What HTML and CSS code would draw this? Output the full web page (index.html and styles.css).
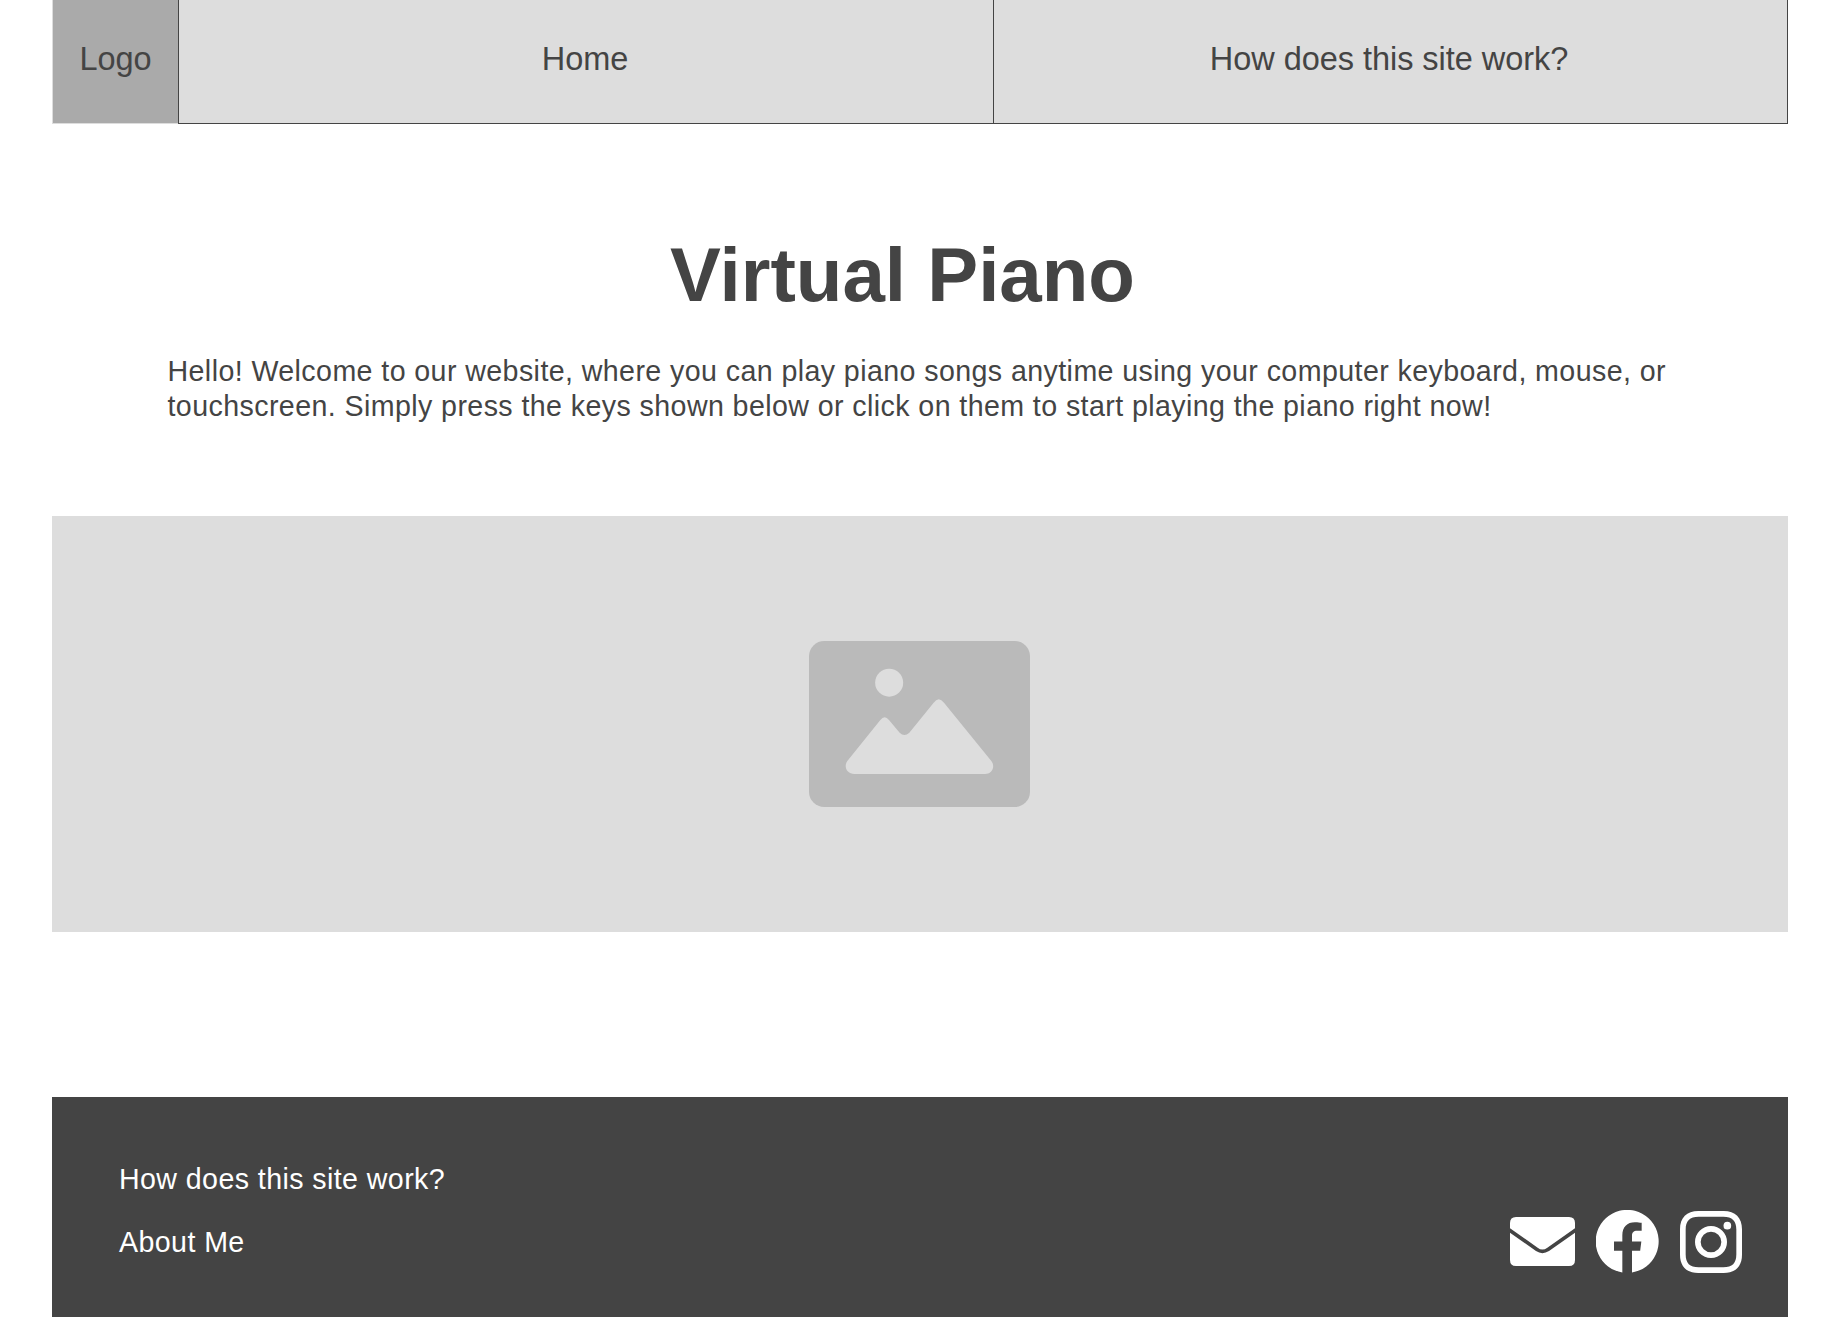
FILE: index.html
```html
<!DOCTYPE html>
<html lang="en">
<head>
<meta charset="utf-8">
<title>Virtual Piano</title>
<link rel="stylesheet" href="styles.css">
</head>
<body>
<div class="page">
  <nav class="nav">
    <a class="nav-logo">Logo</a>
    <a class="nav-item nav-home">Home</a>
    <a class="nav-item nav-how">How does this site work?</a>
  </nav>
  <main>
    <h1 class="title">Virtual Piano</h1>
    <p class="intro">Hello! Welcome to our website, where you can play piano songs anytime using your computer keyboard, mouse, or touchscreen. Simply press the keys shown below or click on them to start playing the piano right now!</p>
    <div class="media">
      <svg class="media-icon" viewBox="0 0 663 498">
        <rect width="663" height="498" rx="46" fill="#bababa"/>
        <circle cx="240.500" cy="125" r="42" fill="#ddd"/>
        <path d="M136 399C114 399 103 377 115 360L214 237Q227 221 240 237L272 275Q286 289 301 275L374 185Q389 164 405 185L547 360C560 377 549 399 528 399Z" fill="#ddd"/>
      </svg>
    </div>
  </main>
  <footer class="footer">
    <div class="footer-links">
      <a>How does this site work?</a>
      <a>About Me</a>
    </div>
    <div class="social">
      <svg class="icon-mail" viewBox="0 0 195 147">
        <path d="M0 34V18Q0 0 18 0H177Q195 0 195 18V34L112 92Q97 103 83 92Z"/>
        <path d="M0 47L78 102Q97 115 117 102L195 47V129Q195 147 177 147H18Q0 147 0 129Z"/>
      </svg>
      <svg class="icon-facebook" viewBox="0 0 189 188">
        <path d="M79 187V121.500H54V94H79V75C79 50 93 36 117 36C126 36 131 37 137 38V62H124C112 62 108 68 108 77V94H136L132.500 121.500H108V187A94.500 94.500 0 1 0 79 187Z"/>
      </svg>
      <svg class="icon-instagram" viewBox="0 0 186 186">
        <path fill-rule="evenodd" d="M55 0H131C166 0 186 20 186 55V131C186 166 166 186 131 186H55C20 186 0 166 0 131V55C0 20 20 0 55 0ZM56 17C29 17 17 29 17 56V130C17 157 29 169 56 169H130C157 169 169 157 169 130V56C169 29 157 17 130 17Z"/>
        <path fill-rule="evenodd" d="M93 45A48 48 0 1 0 93 141A48 48 0 1 0 93 45ZM93 62A31 31 0 1 1 93 124A31 31 0 1 1 93 62Z"/>
        <circle cx="142" cy="44" r="11.500"/>
      </svg>
    </div>
  </footer>
</div>
</body>
</html>
```
FILE: styles.css
```css
* { box-sizing: border-box; }
body {
  margin: 0;
  background: #fff;
  color: #444;
  font-family: "Liberation Sans", Arial, sans-serif;
}
.page {
  width: 1736px;
  height: 1317px;
  margin-left: 52px;
  display: flex;
  flex-direction: column;
  overflow: hidden;
}
.nav {
  display: flex;
  flex: none;
  height: 124px;
  font-size: 32.5px;
  line-height: 36px;
  letter-spacing: -0.04px;
}
.nav-logo {
  width: 126px;
  padding: 41px 0 0 26.5px;
  background: #aaa;
  border: solid #ddd;
  border-width: 0 0 1px 1px;
}
.nav-item {
  padding-top: 41px;
  background: #ddd;
  border: solid #444;
  border-width: 0 0 1px 1px;
  text-align: center;
}
.nav-home { width: 815px; padding-right: 2px; }
.nav-how { width: 795px; border-right-width: 1px; padding-right: 3px; }
.title {
  margin: 107px 0 0;
  padding-right: 35px;
  font-size: 76.3px;
  line-height: 88px;
  text-align: center;
}
.intro {
  width: 1530px;
  margin: 35px 0 0 115.5px;
  font-size: 28.6px;
  line-height: 35px;
  letter-spacing: 0.41px;
}
.media {
  height: 416px;
  margin-top: 92px;
  padding: 125px 0 0 757px;
  background: #ddd;
}
.media-icon {
  display: block;
  width: 221px;
  height: 166px;
}
.footer {
  display: flex;
  flex: 1;
  justify-content: space-between;
  align-items: flex-start;
  margin-top: 165px;
  padding: 65px 46px 0 67px;
  background: #444;
  color: #fff;
}
.footer-links {
  display: flex;
  flex-direction: column;
  gap: 28px;
  font-size: 28.6px;
  line-height: 35px;
  letter-spacing: 0.41px;
}
.social {
  display: flex;
  align-items: center;
  gap: 21px;
  margin-top: 48px;
  fill: #fff;
}
.icon-mail { width: 65px; height: 49px; }
.icon-facebook { width: 63px; height: 63px; }
.icon-instagram { width: 62px; height: 62px; }
```
